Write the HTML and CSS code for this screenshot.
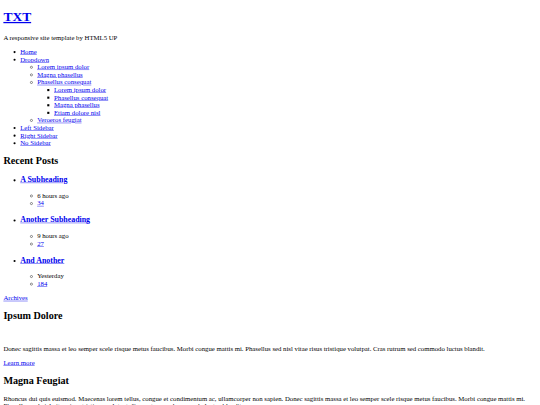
FILE: index.html
```html
<!DOCTYPE html>
<html lang="en">
<head>
<meta charset="utf-8">
<title>TXT by HTML5 UP</title>
<link rel="stylesheet" href="styles.css">
</head>
<body class="viewport">
<div class="page">
<div class="page-body">
<header class="site-header">
  <h1><a href="#">TXT</a></h1>
  <p>A responsive site template by HTML5 UP</p>
</header>
<nav class="site-nav">
  <ul>
    <li><a href="#">Home</a></li>
    <li><a href="#">Dropdown</a>
      <ul>
        <li><a href="#">Lorem ipsum dolor</a></li>
        <li><a href="#">Magna phasellus</a></li>
        <li><a href="#">Phasellus consequat</a>
          <ul>
            <li><a href="#">Lorem ipsum dolor</a></li>
            <li><a href="#">Phasellus consequat</a></li>
            <li><a href="#">Magna phasellus</a></li>
            <li><a href="#">Etiam dolore nisl</a></li>
          </ul>
        </li>
        <li><a href="#">Veroeros feugiat</a></li>
      </ul>
    </li>
    <li><a href="#">Left Sidebar</a></li>
    <li><a href="#">Right Sidebar</a></li>
    <li><a href="#">No Sidebar</a></li>
  </ul>
</nav>
<section class="recent">
  <h2>Recent Posts</h2>
  <ul>
    <li>
      <article>
        <h3><a href="#">A Subheading</a></h3>
        <ul>
          <li>6 hours ago</li>
          <li><a href="#">34</a></li>
        </ul>
      </article>
    </li>
    <li>
      <article>
        <h3><a href="#">Another Subheading</a></h3>
        <ul>
          <li>9 hours ago</li>
          <li><a href="#">27</a></li>
        </ul>
      </article>
    </li>
    <li>
      <article>
        <h3><a href="#">And Another</a></h3>
        <ul>
          <li>Yesterday</li>
          <li><a href="#">184</a></li>
        </ul>
      </article>
    </li>
  </ul>
  <footer><a href="#">Archives</a></footer>
</section>
<section class="post">
  <h2>Ipsum Dolore</h2>
  <a href="#" class="image-slot"></a>
  <p>Donec sagittis massa et leo semper scele risque metus faucibus. Morbi congue mattis mi. Phasellus sed nisl vitae risus tristique volutpat. Cras rutrum sed commodo luctus blandit.</p>
  <footer><a href="#">Learn more</a></footer>
</section>
<section class="post">
  <h2>Magna Feugiat</h2>
  <p>Rhoncus dui quis euismod. Maecenas lorem tellus, congue et condimentum ac, ullamcorper non sapien. Donec sagittis massa et leo semper scele risque metus faucibus. Morbi congue mattis mi. Phasellus sed nisl vitae risus tristique volutpat. Cras rutrum sed commodo luctus blandit.</p>
</section>
</div>
</div>
</body>
</html>
```
FILE: styles.css
```css
html {
  font-family: "Liberation Serif", "Times New Roman", serif;
}
.viewport {
  margin: 0;
  overflow: hidden;
}
.page {
  display: flow-root;
  width: 1280px;
  color: #000;
  transform: scale(0.421875);
  transform-origin: 0 0;
}
.page-body {
  margin: 8px;
}
.image-slot {
  display: block;
  height: 18px;
}
```
